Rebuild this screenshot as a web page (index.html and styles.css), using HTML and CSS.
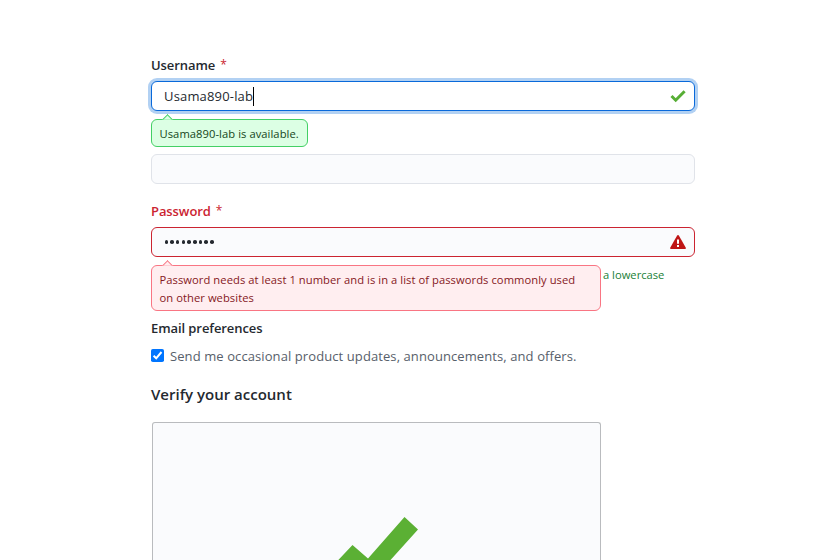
FILE: index.html
```html
<!DOCTYPE html>
<html lang="en">
<head>
<meta charset="utf-8">
<title>Create your account</title>
<link rel="stylesheet" href="styles.css">
</head>
<body>
<form class="signup">
  <div class="label label-username"><span>Username</span><span class="star">*</span></div>
  <div class="field field-focus">
    <span class="value">Usama890-lab</span><span class="caret"></span>
    <svg class="check" width="16" height="14" viewBox="0 0 16 14"><path d="M1.500 7 5.700 11.200 14.600 2.200" fill="none" stroke="#57ae35" stroke-width="3"/></svg>
  </div>
  <div class="note note-success"><span class="note-available">Usama890-lab is available.</span></div>
  <div class="field field-disabled"></div>

  <div class="label label-password"><span>Password</span><span class="star">*</span></div>
  <div class="field field-error">
    <span class="dots"><i></i><i></i><i></i><i></i><i></i><i></i><i></i><i></i><i></i></span>
    <svg class="alert" width="16" height="14" viewBox="0 0 16 14"><path d="M8 0Q8.6 0 9 .7L15.8 12.7Q16.3 14 15 14H1Q-.3 14 .2 12.7L7 .7Q7.4 0 8 0Z" fill="#bf1515"/><path d="M7 4.5h2v4.2H7zM7 10h2v2H7z" fill="#fff"/></svg>
  </div>
  <div class="password-help">
    <div class="note note-error"><span class="note-line1">Password needs at least 1 number and is in a list of passwords commonly used</span><br><span class="note-line2">on other websites</span></div>
    <span class="hint">a lowercase</span>
  </div>

  <div class="label label-email"><span>Email preferences</span></div>
  <div class="option">
    <svg class="checkbox" width="13" height="13" viewBox="0 0 13 13"><rect width="13" height="13" rx="1.8" fill="#0075ff"/><path d="M2.6 6.8 5.2 9.3 10.5 3" fill="none" stroke="#fff" stroke-width="2"/></svg>
    <span class="option-text">Send me occasional product updates, announcements, and offers.</span>
  </div>

  <h2 class="verify-title"><span>Verify your account</span></h2>
  <div class="captcha">
    <svg width="104" height="43" viewBox="0 0 104 43"><path d="M0 55 25.5 28 41 41.5 77.500 0 91 12.500 41 68 24 53 12 66Z" fill="#5bb034"/></svg>
  </div>
</form>
</body>
</html>
```
FILE: styles.css
```css
* { box-sizing: border-box; }
body {
  margin: 0;
  height: 560px;
  overflow: hidden;
  background: #fff;
  color: #24292f;
  font-family: "Open Sans", "Noto Sans", sans-serif;
  font-size: 13px;
}
.signup {
  display: flex;
  flex-direction: column;
  width: 544px;
  margin-left: 151px;
  padding-top: 55px;
}
.label {
  display: flex;
  gap: 5px;
  height: 20px;
  line-height: 20px;
  font-weight: 600;
  letter-spacing: -0.08px;
  white-space: nowrap;
}
.star { color: #cb2431; font-size: 12px; font-weight: 400; }
.label-password { margin-top: 17px; color: #cb2431; }
.label-email { margin-top: 7px; }
.field {
  display: flex;
  align-items: center;
  height: 30px;
  padding: 0 8px 0 12px;
  border: 1px solid #d8dee4;
  border-radius: 6px;
  background: #fafbfd;
}
.field-focus {
  margin-top: 6px;
  border-color: #0969da;
  background: #fff;
  box-shadow: 0 0 0 3px #b2d1f3;
}
.field-disabled { margin-top: 7px; border-color: #e0e3e9; }
.field-error { margin-top: 6px; border-color: #cb2431; }
.value { letter-spacing: 0.17px; white-space: nowrap; }
.caret { width: 1px; height: 19px; background: #000; }
.check, .alert { margin-left: auto; }
.dots { display: flex; gap: 2.1px; padding-left: 0.5px; }
.dots i { width: 3.6px; height: 3.6px; border-radius: 50%; background: #24292f; }
.note {
  position: relative;
  align-self: flex-start;
  border: 1px solid;
  border-radius: 6px;
  padding: 5px 8px 3px 7.5px;
  font-size: 11.2px;
  letter-spacing: 0.06px;
  line-height: 18px;
  white-space: nowrap;
}
.note::before {
  content: "";
  position: absolute;
  left: 11px;
  top: -4px;
  width: 8px;
  height: 8px;
  border: 1px solid;
  border-color: inherit;
  border-right: 0;
  border-bottom: 0;
  background: inherit;
  transform: rotate(45deg);
  clip-path: polygon(-1px -1px, 100% -1px, -1px 100%);
}
.note-success {
  width: 157px;
  height: 28px;
  margin-top: 8px;
  border-color: #43d065;
  background: #dcffe4;
  color: #144620;
}
.note-error {
  width: 450px;
  height: 46px;
  border-color: #f97583;
  background: #ffeef0;
  color: #86181d;
}
.password-help { display: flex; gap: 2px; margin-top: 8px; }
.hint { font-size: 11.2px; line-height: 20px; color: #1a7f37; white-space: nowrap; }
.option {
  display: flex;
  align-items: center;
  gap: 6px;
  height: 20px;
  margin-top: 8px;
  color: #57606a;
  letter-spacing: 0.09px;
  white-space: nowrap;
}
.checkbox { margin-bottom: 2px; }
.verify-title {
  height: 24px;
  margin: 16px 0 0;
  font-size: 15px;
  line-height: 24px;
  font-weight: 600;
}
.captcha {
  width: 449px;
  height: 138px;
  margin: 16px 0 0 1px;
  padding: 94px 0 0 174px;
  border: 1px solid #b9bbbe;
  border-bottom: 0;
  border-radius: 3px 3px 0 0;
  background: #fafbfd;
}
```
